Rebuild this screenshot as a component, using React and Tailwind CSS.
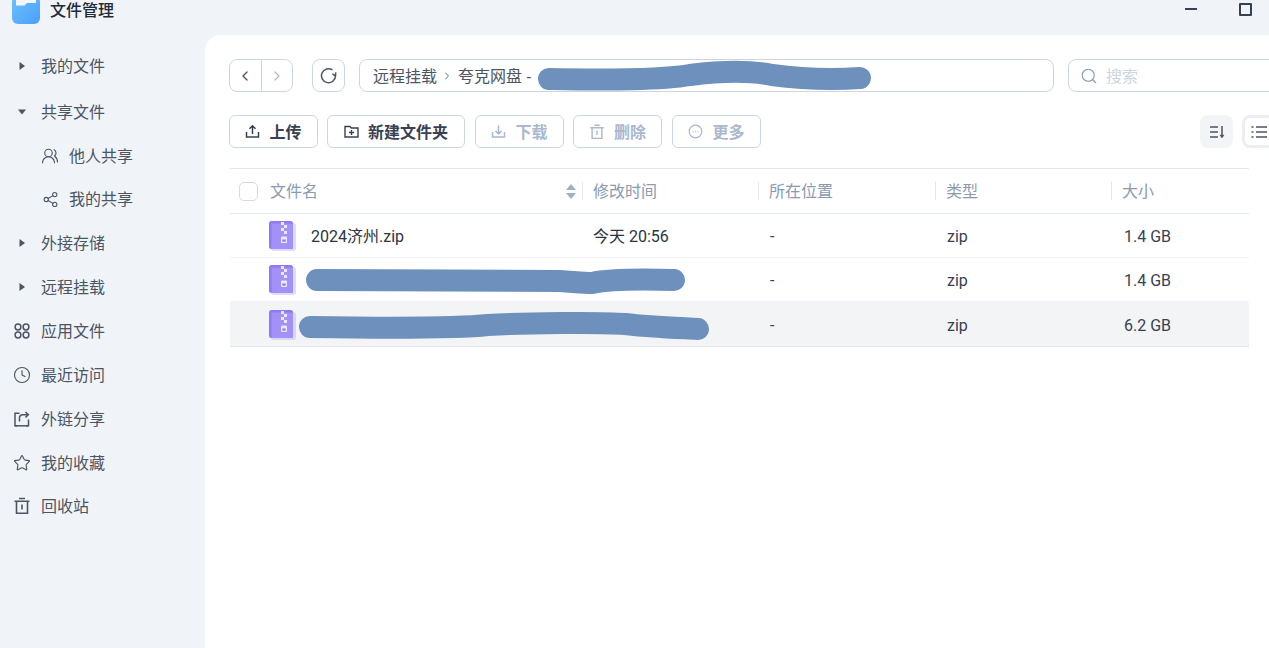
import { ChevronLeft, ChevronRight, Clock, Search, Share2, Star, UsersRound } from "lucide-react";

const FONT = "font-['Noto_Sans','Noto_Sans_CJK_SC',sans-serif]";
const ROW_FONT = "font-['Roboto','Noto_Sans_CJK_SC',sans-serif]";

const Caret = ({ open }) => (
  <svg width="10" height="10" viewBox="0 0 10 10" className="shrink-0">
    {open ? <path d="M1 2.500h8L5 7.500z" fill="#4b5563" /> : <path d="M2.500 1v8L8 5z" fill="#4b5563" />}
  </svg>
);

const AppsIcon = () => (
  <svg width="18" height="18" viewBox="0 0 18 18" fill="none" stroke="#4b5563" strokeWidth="1.5">
    <circle cx="5" cy="5" r="2.9" />
    <circle cx="13" cy="5" r="2.9" />
    <circle cx="5" cy="13" r="2.9" />
    <circle cx="13" cy="13" r="2.9" />
  </svg>
);

const LinkIcon = () => (
  <svg width="18" height="18" viewBox="0 0 18 18" fill="none" stroke="#4b5563" strokeWidth="1.5">
    <path d="M6.500 3.200H2v12.600h2M13 15.800h2.500V9.500" />
    <path d="M2 15.800h13" />
    <path d="M6.500 11.500V8c0-2 1.300-3.300 3.300-3.300h5" />
    <path d="M12.500 2l2.800 2.700-2.800 2.700" />
  </svg>
);

const TrashIcon = ({ color = "#4b5563", size = 18 }) => (
  <svg width={size} height={size} viewBox="0 0 18 18" fill="none" stroke={color} strokeWidth="1.600">
    <path d="M1.500 4.200h15M6 1.500h6M3.500 4.200v12h11v-12M9 7.500v5" />
  </svg>
);

const UploadIcon = () => (
  <svg width="15" height="15" viewBox="0 0 15 15" fill="none" stroke="#374151" strokeWidth="1.500">
    <path d="M1.500 8v5h12V8M7.500 10V2M4.500 4.800l3-3 3 3" />
  </svg>
);

const NewFolderIcon = () => (
  <svg width="15" height="15" viewBox="0 0 15 15" fill="none" stroke="#374151" strokeWidth="1.400">
    <path d="M1 2.500h5l1.300 1.500H14v9H1zM7.500 6v5M5 8.500h5" />
  </svg>
);

const DownloadIcon = () => (
  <svg width="15" height="15" viewBox="0 0 15 15" fill="none" stroke="#a9b8cc" strokeWidth="1.500">
    <path d="M1.500 8v5h12V8M7.500 1.500V10M4.500 7l3 3 3-3" />
  </svg>
);

const MoreIcon = () => (
  <svg width="15" height="15" viewBox="0 0 15 15" fill="none" stroke="#a9b8cc" strokeWidth="1.200">
    <circle cx="7.500" cy="7.500" r="6.300" />
    <path d="M4.700 7.500h.8M7.100 7.500h.8M9.500 7.500h.8" strokeWidth="1.300" />
  </svg>
);

const RefreshIcon = () => (
  <svg width="18" height="18" viewBox="0 0 18 18" fill="none" stroke="#4b5563" strokeWidth="1.500">
    <path d="M15.500 8.500A7 7 0 1 1 12.500 3" />
    <path d="M15.800 5.300l-.4 3.600-3-2" />
  </svg>
);

const SortIcon = () => (
  <svg width="16" height="14" viewBox="0 0 16 14" fill="none" stroke="#4b5563" strokeWidth="1.500">
    <path d="M1 2h8M1 7h8M1 12h8M13 1v11" />
    <path d="M11 10h4l-2 3z" fill="#4b5563" strokeWidth="0.500" />
  </svg>
);

const ListIcon = () => (
  <svg width="16" height="14" viewBox="0 0 16 14" fill="none" stroke="#4b5563" strokeWidth="1.500">
    <path d="M0.500 2h2M0.500 7h2M0.500 12h2M5 2h11M5 7h11M5 12h11" />
  </svg>
);

const ZipIcon = () => (
  <svg width="30" height="32" viewBox="0 0 30 32" className="shrink-0">
    <rect x="3" y="3" width="25" height="28" rx="3" fill="#c9c3f4" opacity="0.600" />
    <rect x="1" y="1" width="24" height="28" rx="2.500" fill="#9079f6" />
    <path d="M3.500 3.500H25V29H3.500z" fill="#a391f8" />
    <path d="M13 2h3v3h-3zM16 5h3v3h-3zM13 8h3v3h-3zM16 11h3v3h-3z" fill="#ece8fe" />
    <rect x="13" y="16.500" width="6" height="6.500" rx="1" fill="#ece8fe" />
    <rect x="14.300" y="19.500" width="3.400" height="2.200" fill="#9079f6" />
  </svg>
);

const FolderLogo = () => (
  <svg width="28" height="28" viewBox="0 0 28 28" className="shrink-0 -mt-1">
    <defs>
      <linearGradient id="logoBlue" x1="0" y1="0" x2="1" y2="1">
        <stop offset="0" stopColor="#6cc0fd" />
        <stop offset="1" stopColor="#4b9ff7" />
      </linearGradient>
    </defs>
    <rect width="28" height="28" rx="6" fill="url(#logoBlue)" />
    <path d="M4 4h20v3H15l-2.500 2.500H4z" fill="#f2f7fd" />
  </svg>
);

const sideItems = [
  { label: "我的文件", icon: <Caret /> },
  { label: "共享文件", icon: <Caret open /> },
  { label: "他人共享", sub: true, icon: <UsersRound size={18} strokeWidth={1.500} color="#4b5563" /> },
  { label: "我的共享", sub: true, icon: <Share2 size={17} strokeWidth={1.500} color="#4b5563" /> },
  { label: "外接存储", icon: <Caret /> },
  { label: "远程挂载", icon: <Caret /> },
  { label: "应用文件", icon: <AppsIcon />, big: true },
  { label: "最近访问", icon: <Clock size={18} strokeWidth={1.500} color="#4b5563" />, big: true },
  { label: "外链分享", icon: <LinkIcon />, big: true },
  { label: "我的收藏", icon: <Star size={18} strokeWidth={1.500} color="#4b5563" />, big: true },
  { label: "回收站", icon: <TrashIcon />, big: true },
];

const SideRow = ({ item, index }) => {
  if (item.sub) {
    return (
      <div className="h-[43.850px] flex items-center pl-[41px] gap-[10px] text-[#4b5563]">
        <span className="w-[18px] flex justify-center">{item.icon}</span>
        <span>{item.label}</span>
      </div>
    );
  }
  return (
    <div className={"h-[43.850px] flex items-center text-[#4b5563] " + (index === 0 ? "mb-[2px] " : "") + (item.big ? "pl-[13px]" : "pl-[17px]")}>
      <span className={item.big ? "w-[28px] flex" : "w-[24px] flex"}>{item.icon}</span>
      <span>{item.label}</span>
    </div>
  );
};

const ToolButton = ({ icon, label, width, disabled }) => (
  <button className={"h-[33px] rounded-[6px] border border-[#ccd5e2] bg-white flex items-center justify-center gap-[9px] font-semibold " + width + " " + (disabled ? "text-[#a9b8cc]" : "text-[#374151]")}>
    {icon}
    <span>{label}</span>
  </button>
);

const headers = ["文件名", "修改时间", "所在位置", "类型", "大小"];

const rows = [
  { name: "2024济州.zip", time: "今天 20:56", size: "1.4 GB" },
  {
    size: "1.4 GB",
    scribble: "M87 22 C150 22 260 23 330 23 C345 24 355 25 362 25 C380 21 410 21 444 22",
    height: "h-[44px]",
  },
  {
    size: "6.2 GB",
    scribble: "M80 25 C150 26 230 26 258 23 C295 21 370 20 395 22 C420 25 450 26 468 27",
    selected: true,
    height: "h-[45px]",
  },
];

const gridCols = "grid grid-cols-[352px_176px_177px_176px_1fr]";

export default function App() {
  return (
    <div className={"w-[1269px] h-[648px] overflow-hidden bg-[#f0f4f9] text-[16px] " + FONT}>
      <div className="h-[35px] flex items-start pl-[12px]">
        <FolderLogo />
        <span className="ml-[10px] leading-[20px] font-medium text-[#1f2937]">文件管理</span>
        <div className="ml-auto flex items-start">
          <span className="mt-[8px] w-[12px] h-[2px] bg-[#374151]" />
          <span className="ml-[42px] mr-[17px] mt-[3px] w-[13px] h-[13px] border-2 border-[#374151] rounded-[1px]" />
        </div>
      </div>

      <div className="flex h-[613px]">
        <aside className="w-[205px] shrink-0 pt-[9px] leading-[24px]">
          {sideItems.map((item, i) => (
            <SideRow key={item.label} item={item} index={i} />
          ))}
        </aside>

        <main className="flex-1 min-w-0 bg-white rounded-tl-[16px] pl-[24px] pt-[24px] overflow-hidden">
          <div className="flex items-center h-[33px] w-[1060px]">
            <div className="w-[64px] h-[33px] flex rounded-[8px] border border-[#ccd5e2]">
              <span className="flex-1 flex items-center justify-center border-r border-[#ccd5e2]">
                <ChevronLeft size={16} strokeWidth={2} color="#4b5563" />
              </span>
              <span className="flex-1 flex items-center justify-center">
                <ChevronRight size={16} strokeWidth={1.700} color="#a9b8cc" />
              </span>
            </div>
            <div className="ml-[19px] w-[33px] h-[33px] rounded-[8px] border border-[#ccd5e2] flex items-center justify-center">
              <RefreshIcon />
            </div>
            <div className="relative ml-[14px] w-[695px] h-[33px] rounded-[8px] border border-[#ccd5e2] flex items-center pl-[13px] text-[#4b5563]">
              <span>远程挂载</span>
              <ChevronRight size={12} strokeWidth={1.700} color="#4b5563" className="ml-[4px] mr-[5px]" />
              <span>夸克网盘 -</span>
              <svg width="345" height="33" viewBox="0 0 345 33" className="absolute left-[172px] -top-[1px]" fill="none">
                <path d="M17 20 C80 21 130 21 158 16 C190 12 220 12 240 16 C270 20 300 21 328 19" stroke="#6d90bc" strokeWidth="22" strokeLinecap="round" />
              </svg>
            </div>
            <div className="ml-[14px] w-[220px] h-[33px] shrink-0 rounded-[8px] border border-[#ccd5e2] flex items-center pl-[11px] gap-[8px] text-[#ccd5e2]">
              <Search size={18} strokeWidth={1.500} color="#8a9ab8" />
              <span>搜索</span>
            </div>
          </div>

          <div className="mt-[23px] flex items-center w-[1046px]">
            <div className="flex gap-[9px]">
              <ToolButton icon={<UploadIcon />} label="上传" width="w-[89px]" />
              <ToolButton icon={<NewFolderIcon />} label="新建文件夹" width="w-[138px]" />
              <ToolButton icon={<DownloadIcon />} label="下载" width="w-[89px] ml-[1px]" disabled />
              <ToolButton icon={<TrashIcon color="#a9b8cc" size={16} />} label="删除" width="w-[89px]" disabled />
              <ToolButton icon={<MoreIcon />} label="更多" width="w-[89px] ml-[1px]" disabled />
            </div>
            <div className="ml-auto flex gap-[9px]">
              <span className="w-[33px] h-[33px] rounded-[8px] bg-[#f3f4f6] flex items-center justify-center">
                <SortIcon />
              </span>
              <span className="w-[33px] h-[33px] rounded-[8px] bg-white border-[3px] border-[#eceef2] flex items-center justify-center">
                <ListIcon />
              </span>
            </div>
          </div>

          <div className="mt-[20px] ml-[1px] w-[1019px] border-t border-[#e5e7eb]">
            <div className={gridCols + " h-[45px] items-center border-b border-[#e2e8f0] text-[#8a9ab0]"}>
              {headers.map((h, i) => (
                <div key={h} className={"flex items-center h-[18px] " + (i === 0 ? "pl-[9px] relative" : "border-l border-[#e5e7eb] pl-[10px]")}>
                  {i === 0 && <span className="w-[19px] h-[19px] mr-[12px] rounded-[5px] border border-[#d4dbe6]" />}
                  <span>{h}</span>
                  {i === 0 && (
                    <svg width="12" height="17" viewBox="0 0 12 17" className="ml-auto mr-[5px]">
                      <path d="M6 1l5 6H1z" fill="#9fb0c6" />
                      <path d="M6 16l5-6H1z" fill="#9fb0c6" />
                    </svg>
                  )}
                </div>
              ))}
            </div>
            {rows.map((row, i) => (
              <div
                key={i}
                className={gridCols + " relative items-center border-b " + ROW_FONT + " " + (row.height || "h-[44px]") + " " + (row.selected ? "bg-[#f3f4f6] border-[#e5e7eb] pt-[1px]" : "border-[#f1f3f6]") + " text-[#374151]"}
              >
                <div className="flex items-center pl-[38px]">
                  <ZipIcon />
                  {row.name && <span className="ml-[13px] pt-[2px] text-[#2b3440]">{row.name}</span>}
                </div>
                <div className="pl-[11px] pt-[2px] text-[#2b3440]">{row.time}</div>
                <div className="pl-[12px] pt-[2px]">-</div>
                <div className="pl-[12px] pt-[2px]">zip</div>
                <div className="pl-[13px] pt-[2px]">{row.size}</div>
                {row.scribble && (
                  <svg width="500" height="44" viewBox="0 0 500 44" className="absolute left-0 top-0" fill="none">
                    <path d={row.scribble} stroke="#6d90bc" strokeWidth="22" strokeLinecap="round" />
                  </svg>
                )}
              </div>
            ))}
          </div>
        </main>
      </div>
    </div>
  );
}
